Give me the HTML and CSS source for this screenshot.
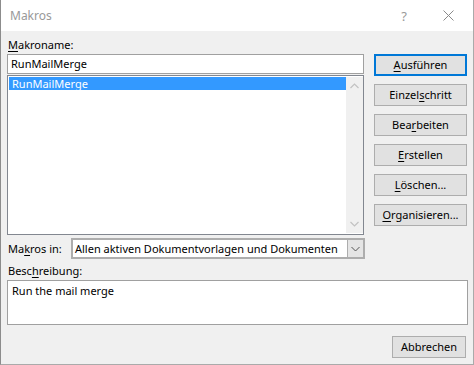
FILE: index.html
```html
<!DOCTYPE html>
<html lang="de">
<head>
    <meta charset="UTF-8">
    <meta name="viewport" content="width=device-width, initial-scale=1.0">
    <title>Makros</title>
    <link rel="stylesheet" href="styles.css">
</head>
<body>
    <div class="window">
        <div class="titlebar">
            <span class="title">Makros</span>
            <span class="help">?</span>
            <svg class="close" width="11" height="11" viewBox="0 0 11 11">
                <path d="M0.5 0.5 L10.5 10.5 M10.5 0.5 L0.5 10.5" stroke="#8a8a8a" stroke-width="1" fill="none"/>
            </svg>
        </div>
        <div class="content">
            <div class="top">
                <div class="left">
                    <div class="label"><u>M</u>akroname:</div>
                    <div class="input">RunMailMerge</div>
                    <div class="listbox">
                        <div class="items">
                            <div class="item selected">RunMailMerge</div>
                        </div>
                        <div class="scrollbar">
                            <svg width="9" height="6" viewBox="0 0 9 6"><path d="M0.5 5 L4.5 1 L8.5 5" stroke="#c2c2c2" stroke-width="1.2" fill="none"/></svg>
                            <svg width="9" height="6" viewBox="0 0 9 6"><path d="M0.5 1 L4.5 5 L8.5 1" stroke="#c2c2c2" stroke-width="1.2" fill="none"/></svg>
                        </div>
                    </div>
                </div>
                <div class="buttons">
                    <button class="btn btn-default"><u>A</u>usführen</button>
                    <button class="btn">Einzel<u>s</u>chritt</button>
                    <button class="btn">Bea<u>r</u>beiten</button>
                    <button class="btn"><u>E</u>rstellen</button>
                    <button class="btn"><u>L</u>öschen...</button>
                    <button class="btn"><u>O</u>rganisieren...</button>
                </div>
            </div>
            <div class="macros-in">
                <span class="label-inline">Ma<u>k</u>ros in:</span>
                <div class="select">
                    <span class="select-text">Allen aktiven Dokumentvorlagen und Dokumenten</span>
                    <span class="select-arrow">
                        <svg width="9" height="6" viewBox="0 0 9 6"><path d="M0.5 1 L4.5 5 L8.5 1" stroke="#555" stroke-width="1" fill="none"/></svg>
                    </span>
                </div>
            </div>
            <div class="label desc-label">Besc<u>h</u>reibung:</div>
            <div class="description">Run the mail merge</div>
            <div class="footer">
                <button class="btn">Abbrechen</button>
            </div>
        </div>
    </div>
</body>
</html>
```

FILE: styles.css
```css
* {
    box-sizing: border-box;
}
body {
    margin: 0;
    font-family: "Noto Sans", "Liberation Sans", sans-serif;
    font-size: 11px;
    color: #000;
}
u {
    text-decoration: underline;
    text-underline-offset: 2px;
}
.window {
    width: 474px;
    height: 365px;
    background-color: #f0f0f0;
    border-left: 1px solid #8c8c8c;
    border-right: 1px solid #aaaaaa;
    border-bottom: 1px solid #aaaaaa;
}
.titlebar {
    height: 31px;
    background-color: #fff;
    display: flex;
    align-items: center;
    padding-left: 9px;
    font-size: 12px;
}
.title {
    color: #999;
    flex: 1;
}
.help {
    color: #999;
    margin-right: 36px;
    font-size: 13px;
}
.close {
    margin-right: 19px;
}
.content {
    padding: 6px 6px 0 6px;
}
.top {
    display: flex;
    gap: 10px;
}
.left {
    width: 357px;
}
.label {
    height: 17px;
    line-height: 15px;
    padding-left: 1px;
}
.input {
    height: 20px;
    background-color: #fff;
    border: 1px solid #a0a0a0;
    padding-left: 3px;
    line-height: 18px;
}
.listbox {
    height: 160px;
    margin-top: 1px;
    background-color: #fff;
    border: 1px solid #828790;
    display: flex;
    padding: 1px 0 1px 1px;
}
.items {
    flex: 1;
}
.item {
    height: 13px;
    line-height: 13px;
    padding-left: 3px;
}
.selected {
    background-color: #3399ff;
    color: #fff;
}
.scrollbar {
    width: 17px;
    background-color: #f0f0f0;
    display: flex;
    flex-direction: column;
    justify-content: space-between;
    align-items: center;
    padding: 6px 0 6px 0;
}
.buttons {
    display: flex;
    flex-direction: column;
    gap: 8px;
    padding-top: 17px;
}
.btn {
    width: 93px;
    height: 22px;
    background-color: #e1e1e1;
    border: 1px solid #adadad;
    font-family: inherit;
    font-size: 11px;
    color: #000;
    padding: 0;
    line-height: 18px;
}
.btn-default {
    border: 2px solid #0078d7;
}
.macros-in {
    display: flex;
    align-items: center;
    margin-top: 3px;
    height: 21px;
}
.label-inline {
    width: 64px;
    padding-left: 1px;
    white-space: nowrap;
}
.select {
    width: 294px;
    height: 21px;
    background-color: #fff;
    border: 2px solid #adadad;
    display: flex;
    align-items: center;
}
.select-text {
    flex: 1;
    padding-left: 2px;
    line-height: 16px;
    white-space: nowrap;
}
.select-arrow {
    width: 16px;
    height: 17px;
    background-color: #e5e5e5;
    border-left: 1px solid #adadad;
    display: flex;
    align-items: center;
    justify-content: center;
}
.desc-label {
    margin-top: 4px;
}
.description {
    width: 461px;
    height: 45px;
    background-color: #fff;
    border: 1px solid #a0a0a0;
    padding: 3px 4px;
    line-height: 14px;
}
.footer {
    display: flex;
    justify-content: flex-end;
    padding-right: 1px;
    margin-top: 11px;
}
.footer .btn {
    width: 74px;
}
```
